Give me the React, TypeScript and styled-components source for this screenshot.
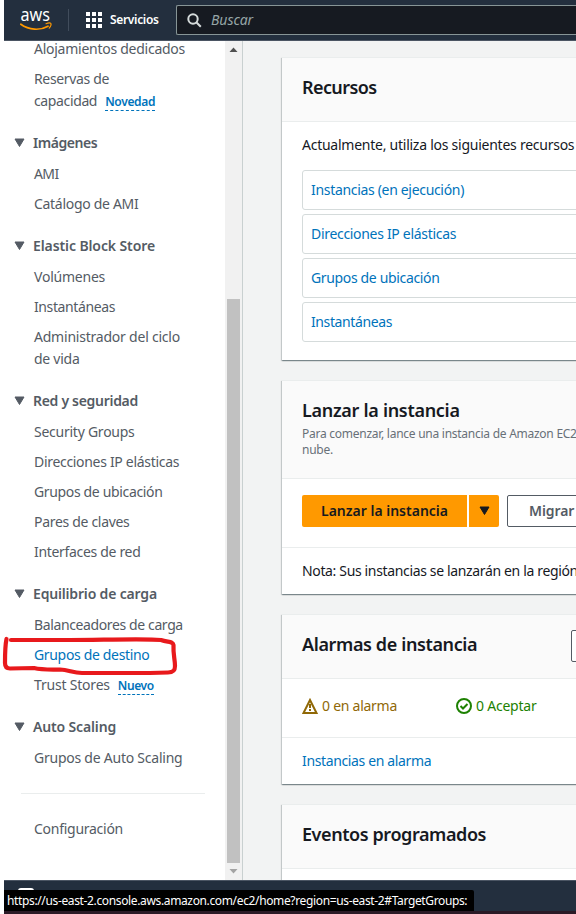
import React from 'react';
import styled, { createGlobalStyle } from 'styled-components';

const GlobalStyle = createGlobalStyle`
  * { box-sizing: border-box; }
  html, body { margin: 0; background: #fff; }
  body {
    font: 400 14px/22px "Noto Sans", "Open Sans", sans-serif;
    color: #16191f;
    overflow: hidden;
  }
`;

const Page = styled.div`
  position: relative;
  display: flex;
  flex-direction: column;
  height: 914px;
  width: 576px;
  padding-left: 4px;
  overflow: hidden;
  background: #fff;
`;

const Text = styled.span<{ $track: number }>`
  letter-spacing: ${(p) => p.$track}px;
  white-space: nowrap;
`;

/* ---------- top bar ---------- */
const TopBar = styled.header`
  flex: none;
  display: flex;
  align-items: flex-start;
  height: 41px;
  background: #232f3e;
  border-bottom: 1px solid #4b5563;
`;

const Logo = styled.svg`
  flex: none;
  width: 36px;
  height: 26px;
  margin: 7px 0 0 14px;
  overflow: visible;
`;

const LogoText = styled.text`
  font: 400 18px "Noto Sans", sans-serif;
  fill: #fff;
`;

const Separator = styled.i`
  width: 1px;
  height: 22px;
  margin: 9px 0 0 14px;
  background: #414d5c;
`;

const ServicesButton = styled.div`
  display: flex;
  align-items: center;
  height: 40px;
  width: 107px;
  padding-left: 17px;
  gap: 8px;
  color: #fff;
  font-size: 12px;
  font-weight: 600;
`;

const SearchBox = styled.div`
  flex: 1;
  display: flex;
  align-items: center;
  gap: 9px;
  height: 30px;
  margin-top: 5px;
  padding-left: 10px;
  background: #161a21;
  border: 1px solid #879596;
  border-right: 0;
  border-radius: 2px 0 0 2px;
  color: #95a5a6;
  font-style: italic;
`;

/* ---------- body ---------- */
const Body = styled.div`
  flex: 1;
  min-height: 0;
  display: flex;
`;

const Sidebar = styled.nav`
  flex: none;
  display: flex;
  width: 239px;
  overflow: hidden;
  border-right: 1px solid #c9d0d0;
`;

const NavList = styled.div`
  width: 221px;
  margin-top: -3px;
`;

const NavItem = styled.div<{ $active?: boolean }>`
  margin: 0 0 8px 30px;
  color: ${(p) => (p.$active ? '#0073bb' : '#545b64')};
`;

const NavHeading = styled.div`
  display: flex;
  align-items: center;
  gap: 8px;
  margin: 20px 0 9px 10px;
  color: #545b64;
  font-weight: 600;
`;

const NavDivider = styled.hr`
  width: 184px;
  height: 1px;
  margin: 24px 0 24px 17px;
  border: 0;
  background: #eaeded;
`;

const Badge = styled.span`
  display: inline-block;
  margin-left: 8px;
  height: 18px;
  line-height: 18px;
  vertical-align: 0;
  border-bottom: 1px dashed #0073bb;
  color: #0073bb;
  font-size: 12px;
  font-weight: 600;
`;

const ScrollTrack = styled.div`
  display: flex;
  flex-direction: column;
  align-items: center;
  width: 17px;
  background: #f1f1f1;
`;

const ScrollArrow = styled.svg`
  flex: none;
  width: 17px;
  height: 17px;
`;

const ScrollThumb = styled.div`
  width: 13px;
  height: 564px;
  margin-top: auto;
  background: #c1c1c1;
`;

const Main = styled.main`
  flex: 1;
  min-width: 0;
  display: flex;
  flex-direction: column;
  gap: 20px;
  padding: 16px 0 0 39px;
  background: #f2f3f3;
  overflow: hidden;
`;

const Panel = styled.section<{ $height: number }>`
  flex: none;
  width: 320px;
  height: ${(p) => p.$height}px;
  border-top: 1px solid #eaeded;
  background: #fff;
  box-shadow: 0 1px 1px 0 rgba(0, 28, 36, 0.3), 1px 1px 1px 0 rgba(0, 28, 36, 0.15),
    -1px 1px 1px 0 rgba(0, 28, 36, 0.15);
`;

const PanelHeader = styled.div<{ $height?: number }>`
  display: flex;
  justify-content: space-between;
  height: ${(p) => p.$height ?? 64}px;
  padding: 18px 0 0 20px;
  background: #fafafa;
  border-bottom: 1px solid #eaeded;
`;

const PanelTitle = styled.h2`
  margin: 0;
  font-size: 18px;
  line-height: 22px;
  font-weight: 600;
`;

const Description = styled.p`
  margin: 5px 0 0;
  font-size: 12px;
  line-height: 16px;
  color: #687078;
  white-space: nowrap;
`;

const Intro = styled.div`
  padding: 12px 0 0 20px;
`;

const ResourceList = styled.div`
  display: flex;
  flex-direction: column;
  gap: 4px;
  padding: 14px 0 0 20px;
`;

const ResourceLink = styled.a`
  display: flex;
  align-items: center;
  height: 40px;
  padding-left: 8px;
  border: 1px solid #d5dbdb;
  border-radius: 3px;
  color: #0073bb;
`;

const ButtonRow = styled.div`
  display: flex;
  height: 69px;
  padding: 16px 0 0 20px;
  border-bottom: 1px solid #eaeded;
`;

const PrimaryButton = styled.div<{ $width: number; $side: 'left' | 'right' }>`
  flex: none;
  display: flex;
  align-items: center;
  justify-content: center;
  width: ${(p) => p.$width}px;
  height: 32px;
  margin-left: ${(p) => (p.$side === 'right' ? 2 : 0)}px;
  border-radius: ${(p) => (p.$side === 'left' ? '2px 0 0 2px' : '0 2px 2px 0')};
  background: #ff9900;
  font-weight: 600;
`;

const OutlineButton = styled.div`
  flex: none;
  display: flex;
  align-items: center;
  width: 120px;
  height: 32px;
  margin-left: 8px;
  padding-left: 21px;
  border: 1px solid #545b64;
  border-radius: 2px;
  background: #fff;
  color: #545b64;
  font-weight: 600;
`;

const HeaderAction = styled(OutlineButton)`
  width: 31px;
  margin: -3px 0 0;
`;

const PanelFooter = styled.div<{ $link?: boolean }>`
  padding: 12px 0 0 20px;
  color: ${(p) => (p.$link ? '#0073bb' : 'inherit')};
`;

const StatusRow = styled.div`
  display: grid;
  grid-template-columns: 154px 1fr;
  align-items: center;
  height: 59px;
  padding: 0 0 4px 20px;
  border-bottom: 1px solid #eaeded;
`;

const Status = styled.div<{ $tone: string }>`
  display: flex;
  align-items: center;
  gap: 4px;
  color: ${(p) => p.$tone};
`;

/* ---------- bottom ---------- */
const BottomBar = styled.footer`
  flex: none;
  height: 34px;
  padding-left: 14px;
  background: #232f3e;
  border-top: 1px solid #4b5563;
  border-bottom: 3px solid #2b1a26;
`;

const FooterIcon = styled.i`
  display: block;
  width: 16px;
  height: 10px;
  margin-top: 7px;
  border-radius: 3px 3px 0 0;
  background: #fff;
`;

const UrlTip = styled.div`
  position: absolute;
  left: 4px;
  top: 890px;
  width: 470px;
  height: 21px;
  padding-left: 3px;
  border-radius: 0 2px 0 0;
  background: #000;
  color: #fff;
  font-size: 12px;
  line-height: 21px;
`;

const Scribble = styled.svg`
  position: absolute;
  left: 0;
  top: 630px;
  width: 190px;
  height: 50px;
  fill: none;
  stroke: #e8191c;
  stroke-width: 4.2;
  stroke-linecap: round;
  stroke-linejoin: round;
`;

const Caret = ({ color = '#545b64' }: { color?: string }) => (
  <svg width="11" height="10" viewBox="0 0 11 10">
    <path d="M1 1h9L5.5 8.5z" fill={color} stroke={color} strokeLinejoin="round" />
  </svg>
);

type Entry = { text: string; track: number; more?: [string, number]; badge?: [string, number]; active?: boolean };
type Group = { title?: [string, number]; items: Entry[] };

const groups: Group[] = [
  {
    items: [
      { text: 'Alojamientos dedicados', track: -0.26 },
      { text: 'Reservas de', track: -0.35, more: ['capacidad', -0.37], badge: ['Novedad', -0.32] },
    ],
  },
  {
    title: ['Imágenes', -0.45],
    items: [
      { text: 'AMI', track: -0.63 },
      { text: 'Catálogo de AMI', track: -0.3 },
    ],
  },
  {
    title: ['Elastic Block Store', -0.1],
    items: [
      { text: 'Volúmenes', track: -0.23 },
      { text: 'Instantáneas', track: -0.39 },
      { text: 'Administrador del ciclo', track: -0.22, more: ['de vida', -0.26] },
    ],
  },
  {
    title: ['Red y seguridad', -0.3],
    items: [
      { text: 'Security Groups', track: -0.25 },
      { text: 'Direcciones IP elásticas', track: -0.31 },
      { text: 'Grupos de ubicación', track: -0.35 },
      { text: 'Pares de claves', track: -0.31 },
      { text: 'Interfaces de red', track: -0.32 },
    ],
  },
  {
    title: ['Equilibrio de carga', -0.17],
    items: [
      { text: 'Balanceadores de carga', track: -0.38 },
      { text: 'Grupos de destino', track: -0.335, active: true },
      { text: 'Trust Stores', track: -0.2, badge: ['Nuevo', -0.4] },
    ],
  },
  {
    title: ['Auto Scaling', -0.15],
    items: [{ text: 'Grupos de Auto Scaling', track: -0.24 }],
  },
];

const resources: [string, number][] = [
  ['Instancias (en ejecución)', -0.32],
  ['Direcciones IP elásticas', -0.31],
  ['Grupos de ubicación', -0.35],
  ['Instantáneas', -0.39],
];

const NavGroup = ({ group }: { group: Group }) => (
  <>
    {group.title && (
      <NavHeading>
        <Caret />
        <Text $track={group.title[1]}>{group.title[0]}</Text>
      </NavHeading>
    )}
    {group.items.map((it) => (
      <NavItem key={it.text} $active={it.active}>
        <Text $track={it.track}>{it.text}</Text>
        {it.more && (
          <>
            <br />
            <Text $track={it.more[1]}>{it.more[0]}</Text>
          </>
        )}
        {it.badge && (
          <Badge>
            <Text $track={it.badge[1]}>{it.badge[0]}</Text>
          </Badge>
        )}
      </NavItem>
    ))}
  </>
);

const gridCells = [0, 6, 12];

export default function App() {
  return (
    <Page>
      <GlobalStyle />
      <TopBar>
        <Logo viewBox="0 0 36 26">
          <LogoText x="2.5" y="13.7" textLength="29.5" lengthAdjust="spacingAndGlyphs">
            aws
          </LogoText>
          <path d="M2.8 17.2C11 23.2 22 23.8 30 19.2" fill="none" stroke="#f90" strokeWidth="1.7" strokeLinecap="round" />
          <path d="M28 16.7C30 15.9 32.4 15.9 32.9 16.5C33.3 17.3 32.5 19.6 31.2 21.2" fill="none" stroke="#f90" strokeWidth="1.1" strokeLinecap="round" strokeLinejoin="round" />
        </Logo>
        <Separator />
        <ServicesButton>
          <svg width="16" height="16" viewBox="0 0 16 16" fill="#fff">
            {gridCells.map((y) => gridCells.map((x) => <rect key={`${x}-${y}`} x={x} y={y} width="4" height="4" />))}
          </svg>
          <Text $track={-0.33}>Servicios</Text>
        </ServicesButton>
        <SearchBox>
          <svg width="15" height="15" viewBox="0 0 15 15" fill="none" stroke="#d5dbdb" strokeWidth="2">
            <circle cx="6" cy="6" r="4.7" />
            <path d="M9.5 9.5l4.3 4.3" />
          </svg>
          <Text $track={-0.05}>Buscar</Text>
        </SearchBox>
      </TopBar>

      <Body>
        <Sidebar>
          <NavList>
            {groups.map((g, i) => (
              <NavGroup key={i} group={g} />
            ))}
            <NavDivider />
            <NavItem>
              <Text $track={-0.27}>Configuración</Text>
            </NavItem>
          </NavList>
          <ScrollTrack>
            <ScrollArrow viewBox="0 0 17 17">
              <path d="M4.5 11L8.5 6.5L12.5 11z" fill="#505050" />
            </ScrollArrow>
            <ScrollThumb />
            <ScrollArrow viewBox="0 0 17 17">
              <path d="M4.5 6L8.5 10.5L12.5 6z" fill="#a3a3a3" />
            </ScrollArrow>
          </ScrollTrack>
        </Sidebar>

        <Main>
          <Panel $height={303}>
            <PanelHeader>
              <PanelTitle>
                <Text $track={-0.6}>Recursos</Text>
              </PanelTitle>
            </PanelHeader>
            <Intro>
              <Text $track={-0.25}>Actualmente, utiliza los siguientes recursos</Text>
            </Intro>
            <ResourceList>
              {resources.map(([name, track]) => (
                <ResourceLink key={name}>
                  <Text $track={track}>{name}</Text>
                </ResourceLink>
              ))}
            </ResourceList>
          </Panel>

          <Panel $height={214}>
            <PanelHeader $height={98}>
              <div>
                <PanelTitle>
                  <Text $track={-0.3}>Lanzar la instancia</Text>
                </PanelTitle>
                <Description>
                  <Text $track={-0.26}>Para comenzar, lance una instancia de Amazon EC2</Text>
                  <br />
                  <Text $track={-0.26}>nube.</Text>
                </Description>
              </div>
            </PanelHeader>
            <ButtonRow>
              <PrimaryButton $width={165} $side="left">
                <Text $track={0}>Lanzar la instancia</Text>
              </PrimaryButton>
              <PrimaryButton $width={30} $side="right">
                <Caret color="#16191f" />
              </PrimaryButton>
              <OutlineButton>
                <Text $track={-0.1}>Migrar</Text>
              </OutlineButton>
            </ButtonRow>
            <PanelFooter>
              <Text $track={-0.35}>Nota: Sus instancias se lanzarán en la región</Text>
            </PanelFooter>
          </Panel>

          <Panel $height={170}>
            <PanelHeader>
              <PanelTitle>
                <Text $track={-0.38}>Alarmas de instancia</Text>
              </PanelTitle>
              <HeaderAction />
            </PanelHeader>
            <StatusRow>
              <Status $tone="#906806">
                <svg width="16" height="16" viewBox="0 0 16 16" fill="none" stroke="#906806" strokeWidth="2">
                  <path d="M8 2L14.4 14.9H1.6z" />
                  <path d="M8 6v4M8 11v2" />
                </svg>
                <Text $track={-0.26}>0 en alarma</Text>
              </Status>
              <Status $tone="#1d8102">
                <svg width="16" height="16" viewBox="0 0 16 16" fill="none" stroke="#1d8102" strokeWidth="2">
                  <circle cx="8" cy="8" r="7" />
                  <path d="M4.5 8l2.5 2.5 4.5-4.5" />
                </svg>
                <Text $track={-0.22}>0 Aceptar</Text>
              </Status>
            </StatusRow>
            <PanelFooter $link>
              <Text $track={-0.36}>Instancias en alarma</Text>
            </PanelFooter>
          </Panel>

          <Panel $height={120}>
            <PanelHeader>
              <PanelTitle>
                <Text $track={-0.42}>Eventos programados</Text>
              </PanelTitle>
            </PanelHeader>
          </Panel>
        </Main>
      </Body>

      <BottomBar>
        <FooterIcon />
      </BottomBar>
      <UrlTip>
        <Text $track={-0.36}>https://us-east-2.console.aws.amazon.com/ec2/home?region=us-east-2#TargetGroups:</Text>
      </UrlTip>
      <Scribble viewBox="0 630 190 50">
        <path d="M6.5 639C5 646 5 654 5 663C5 667 7 668.5 10 668.5L34 668C42 670 51 669.5 60 669.5C69 670 73 673 82 673L150 673L168 672.5C174 672.5 175 670 175 666C175 659 173 655 173.5 645C173 641 168 642.5 161 640C147 638.5 100 640 70 640L11 640" />
      </Scribble>
    </Page>
  );
}
